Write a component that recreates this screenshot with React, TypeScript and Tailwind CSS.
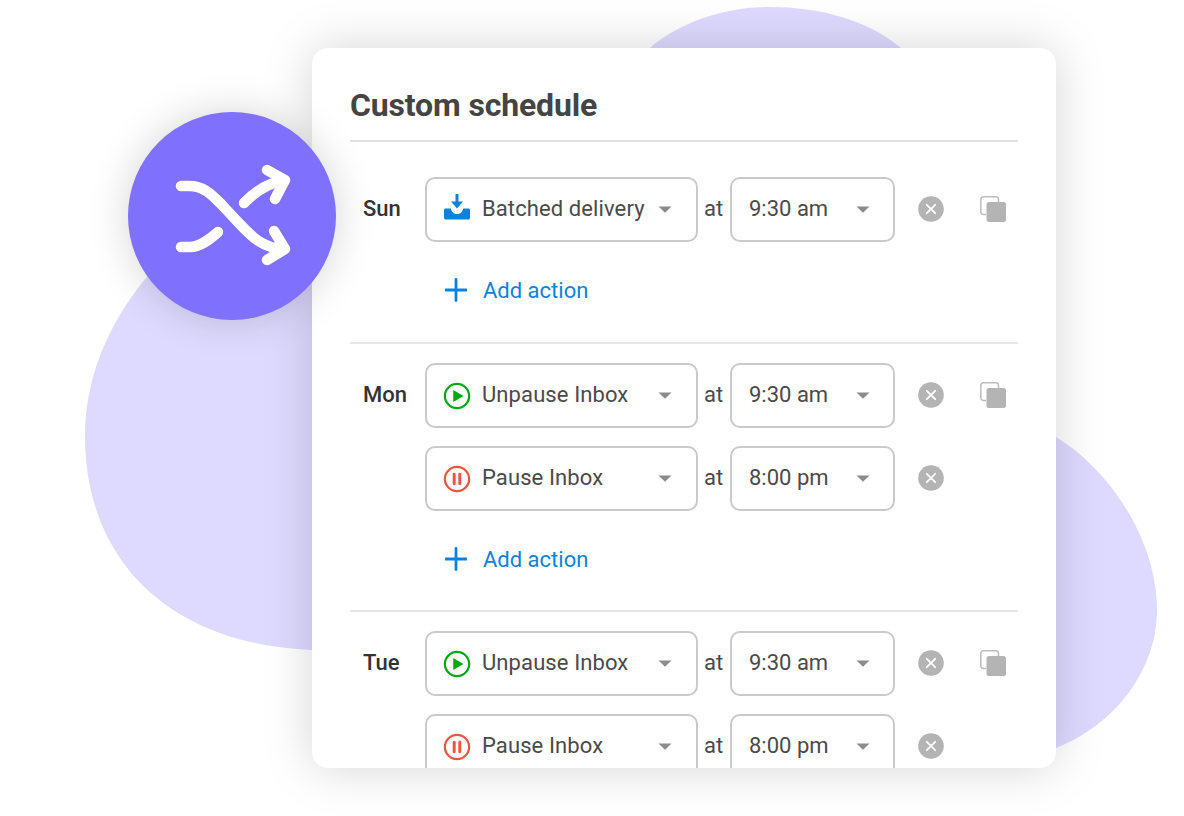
const fontRoboto = "font-['Roboto',sans-serif]";

const DownloadIcon = () => (
  <svg width="28" height="32" viewBox="0 0 28 32" fill="none">
    <path d="M12.500 0h3v7.500h4.500L14 14.500 8 7.500h4.500z" fill="#0b83de" />
    <path d="M2.500 14.500h5.300c.6 3.300 3 5.500 6.200 5.500s5.600-2.200 6.200-5.500h5.300c.8 0 1.500.7 1.500 1.500v8c0 .8-.7 1.500-1.500 1.500h-23C1.700 25.500 1 24.800 1 24v-8c0-.8.700-1.500 1.500-1.500z" fill="#0b83de" />
  </svg>
);

const PlayIcon = () => (
  <svg width="30" height="30" viewBox="0 0 30 30" fill="none">
    <circle cx="15" cy="15" r="13" stroke="#00a912" strokeWidth="2.4" />
    <path d="M11 8.500 22 15l-11 6.500z" fill="#00a912" />
  </svg>
);

const PauseIcon = () => (
  <svg width="30" height="30" viewBox="0 0 30 30" fill="none">
    <circle cx="15" cy="15" r="13" stroke="#e8573f" strokeWidth="2.4" />
    <path d="M12 10v10M18 10v10" stroke="#e8573f" strokeWidth="3.200" strokeLinecap="round" />
  </svg>
);

const Caret = () => (
  <svg width="14" height="7" viewBox="0 0 14 7">
    <path d="M0.500 0.500h13L7 6.800z" fill="#8c8c8c" />
  </svg>
);

const RemoveIcon = () => (
  <svg width="26" height="26" viewBox="0 0 26 26" className="shrink-0">
    <circle cx="13" cy="13" r="12.800" fill="#b4b4b4" />
    <path d="M8.800 8.800l8.400 8.400M17.200 8.800l-8.400 8.400" stroke="#fff" strokeWidth="1.800" strokeLinecap="round" />
  </svg>
);

const CopyIcon = () => (
  <svg width="26" height="26" viewBox="0 0 26 26" className="shrink-0">
    <path d="M6 18.500H3.500C2 18.500.8 17.300.8 15.800V3.500C.8 2 2 .8 3.500.8h12.300c1.500 0 2.700 1.200 2.700 2.700V6" fill="none" stroke="#bdbdbd" strokeWidth="1.500" />
    <rect x="6.500" y="6" width="19.500" height="20" rx="2.500" fill="#b4b4b4" />
  </svg>
);

const PlusIcon = () => (
  <svg width="22" height="24" viewBox="0 0 22 24">
    <path d="M11 1.500v21M.8 12h20.400" stroke="#0b83de" strokeWidth="2.800" strokeLinecap="round" />
  </svg>
);

const ShuffleIcon = () => (
  <svg width="208" height="208" viewBox="128 112 208 208" fill="none" stroke="#fff" strokeWidth="10.500" strokeLinecap="round" strokeLinejoin="round">
    <path d="M181 186h8c16 0 24 10 33 19l14 15c16 17 26 28 48 29" />
    <path d="M274 231l11 18-18 11" />
    <path d="M181 247h9c10 0 19-7 28-15" />
    <path d="M244 203c10-10 23-21 40-22" />
    <path d="M267 170l18 10-10 19" />
  </svg>
);

const Row = ({
  action,
  time,
  day,
  copy,
}: {
  action: 'batched' | 'unpause' | 'pause';
  time: string;
  day?: string;
  copy?: boolean;
}) => {
  return (
    <div className="flex h-[65px] shrink-0 items-center">
      <div className="w-[75px] pb-[3px] pl-[13px] text-[22px] font-medium text-[#333]">{day}</div>
      <div className="flex h-[65px] w-[273px] items-center rounded-[10px] border-2 border-[#cacaca] pl-[16px]">
        <div className="flex w-[28px] shrink-0 items-center justify-center">
          {action === 'batched' && <DownloadIcon />}
          {action === 'unpause' && <PlayIcon />}
          {action === 'pause' && <PauseIcon />}
        </div>
        <span className="ml-[11px] w-[176px] pb-[3px] text-[22px] tracking-[0.1px] text-[#4a4a4a]">
          {action === 'batched' ? 'Batched delivery' : action === 'unpause' ? 'Unpause Inbox' : 'Pause Inbox'}
        </span>
        <Caret />
      </div>
      <span className="w-[32px] pb-[3px] pl-[6px] text-[22px] text-[#4a4a4a]">at</span>
      <div className="flex h-[65px] w-[165px] items-center rounded-[10px] border-2 border-[#cacaca] pl-[17px]">
        <span className="w-[107px] pb-[3px] text-[22px] text-[#4a4a4a]">{time}</span>
        <Caret />
      </div>
      <div className="ml-[23px] pb-[2px]">
        <RemoveIcon />
      </div>
      {copy && (
        <div className="ml-[36px] pb-[2px]">
          <CopyIcon />
        </div>
      )}
    </div>
  );
};

const AddAction = ({ short }: { short?: boolean }) => (
  <div className={`flex items-center pl-[95px] ${short ? 'h-[99px] pb-[3px]' : 'h-[100px] pb-[4px]'}`}>
    <PlusIcon />
    <span className="ml-[16px] text-[22px] text-[#0b83de]">Add action</span>
  </div>
);

const App = () => {
  return (
    <div className={`relative h-[816px] w-[1184px] overflow-hidden bg-white ${fontRoboto}`}>
      <svg className="absolute inset-0" width="1184" height="816" viewBox="0 0 1184 816">
        <path
          d="M650 48C680 22 725 7 770 7c50 0 98 13 131 41L1056 437C1110 470 1157 540 1157 610 1157 670 1115 725 1056 748L312 650C175 645 85 565 85 436 85 370 115 310 160 262z"
          fill="#dedaff"
        />
      </svg>
      <div className="relative ml-[312px] mt-[48px] inline-block">
        <div className="flex h-[720px] w-[744px] flex-col overflow-hidden rounded-[16px] bg-white px-[38px] shadow-[0_0_50px_rgba(0,0,0,0.17)]">
          <div className="shrink-0 border-b-2 border-[#e0e0e0] pb-[14px] pt-[37px] text-[32px] font-bold leading-[41px] tracking-[-0.15px] text-[#444]">
            Custom schedule
          </div>
          <div className="shrink-0 border-b-2 border-[#e6e6e6] pt-[35px]">
            <Row action="batched" time="9:30 am" day="Sun" copy />
            <AddAction />
          </div>
          <div className="flex shrink-0 flex-col gap-[18px] border-b-2 border-[#e6e6e6] pt-[19px]">
            <Row action="unpause" time="9:30 am" day="Mon" copy />
            <Row action="pause" time="8:00 pm" />
            <div className="-mt-[18px]">
              <AddAction short />
            </div>
          </div>
          <div className="flex shrink-0 flex-col gap-[18px] pt-[19px]">
            <Row action="unpause" time="9:30 am" day="Tue" copy />
            <Row action="pause" time="8:00 pm" />
          </div>
        </div>
      </div>
      <div className="absolute left-[128px] top-[112px] h-[208px] w-[208px] rounded-full bg-[#7f70fd] shadow-[0_0_40px_rgba(0,0,0,0.17)]">
        <ShuffleIcon />
      </div>
    </div>
  );
};

export default App;
